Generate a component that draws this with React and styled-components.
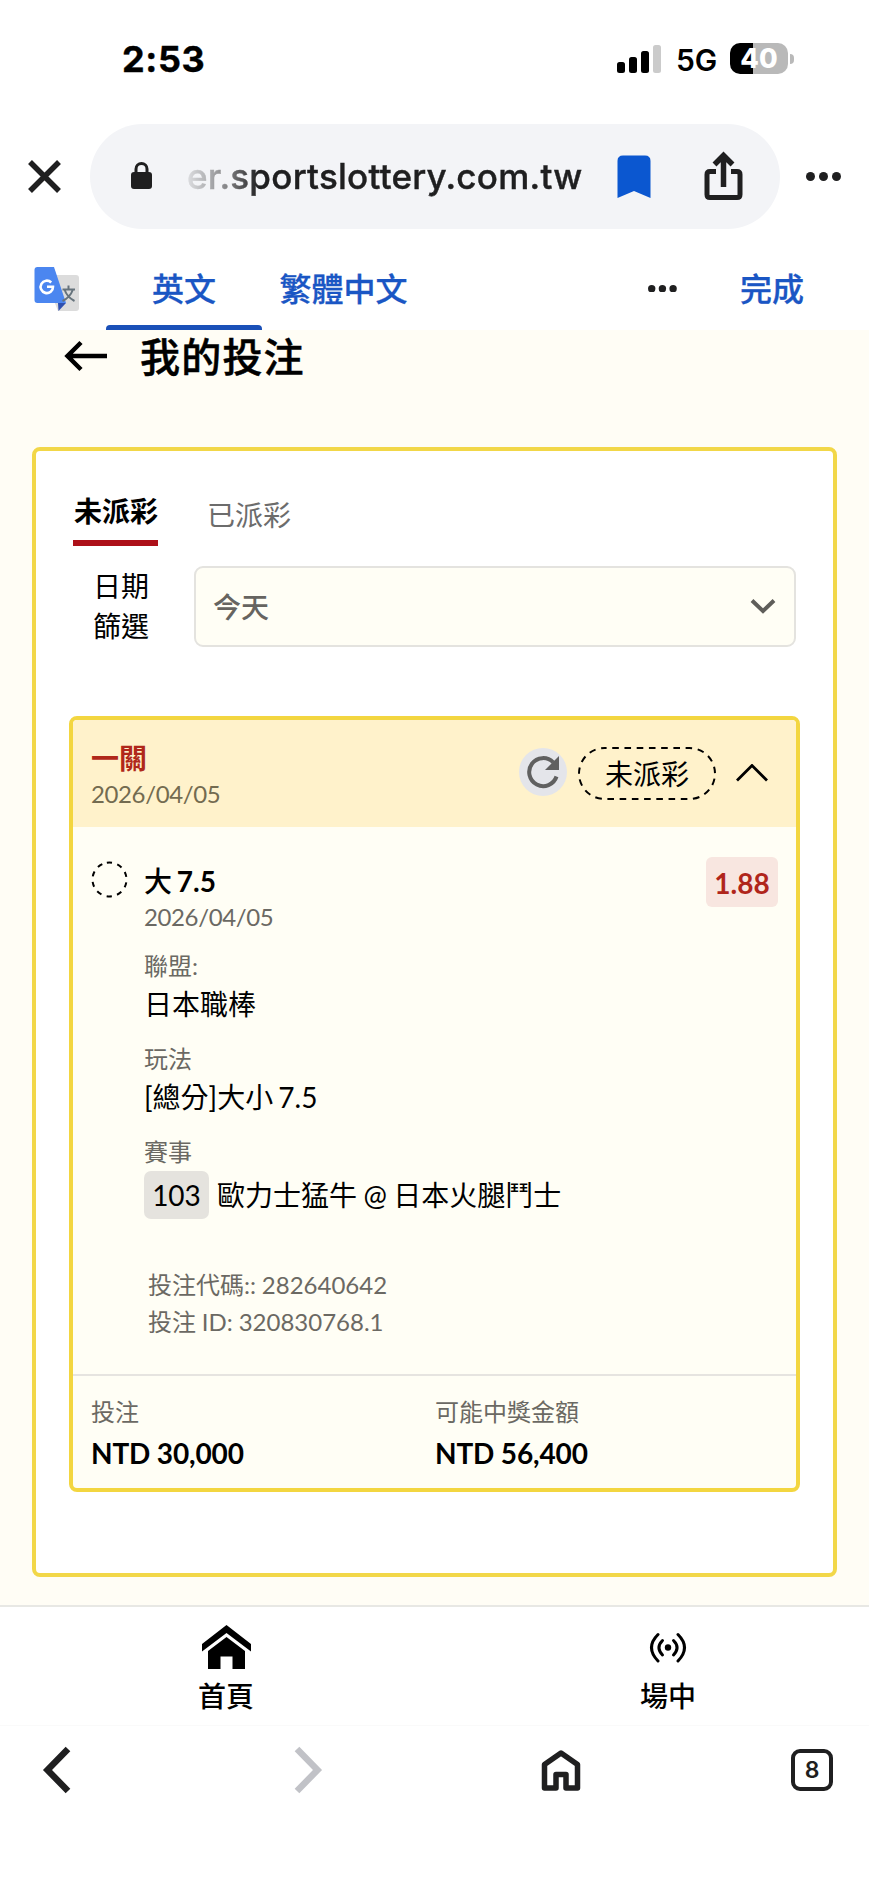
import React from "react";
import styled, { createGlobalStyle } from "styled-components";

const GlobalStyle = createGlobalStyle`
  *, *::before, *::after { box-sizing: border-box; }
  body {
    margin: 0;
    background: #fff;
    color: #000;
    font-family: Lato, "Noto Sans CJK TC", sans-serif;
  }
  svg { display: block; flex: none; }
`;

const uiFont = `Inter, "Noto Sans CJK TC", sans-serif`;

const Screen = styled.div`
  width: 869px;
  height: 1884px;
  display: flex;
  flex-direction: column;
  overflow: hidden;
  background: #fff;
`;

/* ---------- status bar ---------- */
const StatusBar = styled.div`
  height: 123px;
  padding: 0 75px 6px 122px;
  display: flex;
  align-items: center;
  font-family: ${uiFont};
`;
const Clock = styled.div`
  flex: 1;
  font-size: 36px;
  font-weight: 700;
  line-height: 44px;
  letter-spacing: 0.6px;
  -webkit-text-stroke: 0.4px #000;
`;
const Network = styled.div`
  margin: 2px 12px 0 14px;
  width: 42px;
  font-size: 30px;
  font-weight: 600;
  line-height: 36px;
`;
const Battery = styled.div`
  width: 58px;
  height: 31px;
  margin-right: 2px;
  border-radius: 10px;
  background: linear-gradient(to right, #000 23px, #b9b9b9 23px);
  color: #fff;
  font-size: 27px;
  font-weight: 800;
  line-height: 31px;
  text-align: center;
`;
const BatteryTip = styled.div`
  width: 4px;
  height: 10px;
  border-radius: 0 5px 5px 0;
  background: #b9b9b9;
`;

/* ---------- address bar ---------- */
const AddressRow = styled.div`
  height: 106px;
  padding: 0 26px 0 27px;
  display: flex;
  align-items: center;
`;
const AddressPill = styled.div`
  width: 690px;
  height: 105px;
  margin: 0 26px 0 28px;
  padding: 0 37px 0 41px;
  display: flex;
  align-items: center;
  border-radius: 53px;
  background: #f3f4f7;
`;
const Url = styled.div`
  width: 400px;
  margin: 0 30px 0 35px;
  font-family: ${uiFont};
  font-size: 35px;
  font-weight: 550;
  letter-spacing: 0.25px;
  line-height: 48px;
  white-space: nowrap;
  color: #1f1f20;
  -webkit-text-stroke: 0.4px #1f1f20;
  mask-image: linear-gradient(to right, rgba(0, 0, 0, 0.1) 0, rgba(0, 0, 0, 0.5) 38px, #000 72px);
`;
const ShareSlot = styled.div`
  margin-left: auto;
`;

/* ---------- translate bar ---------- */
const TranslateBar = styled.div`
  height: 101px;
  padding: 0 65px 0 33px;
  display: flex;
  font-family: ${uiFont};
`;
const LogoSlot = styled.div`
  padding-top: 38px;
  width: 73px;
`;
const Language = styled.div`
  width: ${(p) => p.$width}px;
  padding-top: 39px;
  text-align: center;
  font-size: 32px;
  font-weight: 500;
  line-height: 43px;
  color: #1a56c4;
  -webkit-text-stroke: 0.3px #1a56c4;
  border-bottom: 5px solid transparent;
  ${(p) =>
    p.$active &&
    `position: relative;
     &::after {
       content: "";
       position: absolute;
       left: 0; right: 0; bottom: -5px;
       height: 5px;
       border-radius: 4px 4px 0 0;
       background: #1a50b8;
     }`}
`;
const MoreSlot = styled.div`
  margin-left: auto;
  padding-top: 56px;
  width: 92px;
`;

/* ---------- page ---------- */
const Page = styled.main`
  height: 1275px;
  padding: 0 32px;
  background: #fffdf5;
`;
const PageHeader = styled.header`
  height: 117px;
  padding: 0 0 0 32px;
  display: flex;
  align-items: flex-start;
`;
const BackSlot = styled.div`
  margin-top: 10px;
`;
const Title = styled.h1`
  margin: 2px 0 0 32px;
  font-size: 40px;
  font-weight: 500;
  letter-spacing: 1.2px;
  line-height: 50px;
  -webkit-text-stroke: 0.5px #000;
`;
const Panel = styled.section`
  width: 805px;
  height: 1130px;
  border: 4px solid #f2d748;
  border-radius: 8px;
  padding: 0 33px;
  background: #fff;
`;
const Tabs = styled.div`
  display: flex;
  gap: 48px;
  padding: 40px 0 0 4px;
  height: 95px;
`;
const Tab = styled.div`
  height: 55px;
  padding: ${(p) => (p.$active ? 0 : 4)}px 0 0 1px;
  font-size: 28px;
  line-height: 40px;
  font-weight: ${(p) => (p.$active ? 700 : 400)};
  color: ${(p) => (p.$active ? "#000" : "#6c6c6c")};
  ${(p) => p.$active && "border-bottom: 6px solid #ad1019;"}
`;
const FilterRow = styled.div`
  display: flex;
  align-items: center;
  margin-top: 20px;
  height: 81px;
  padding-left: 24px;
`;
const FilterLabel = styled.div`
  width: 57px;
  margin: 0 44px 1px 0;
  font-size: 28px;
  line-height: 40px;
`;
const Select = styled.div`
  width: 602px;
  height: 81px;
  padding: 0 18px 2px 17px;
  display: flex;
  align-items: center;
  justify-content: space-between;
  border: 2px solid #e4e3df;
  border-radius: 9px;
  background: #fffef5;
  color: #666460;
  font-size: 28px;
  font-weight: 500;
`;

/* ---------- bet slip ---------- */
const Slip = styled.article`
  width: 731px;
  height: 776px;
  margin-top: 69px;
  border: 4px solid #f3d640;
  border-radius: 8px;
  background: #fffef5;
  overflow: hidden;
`;
const SlipHeader = styled.div`
  height: 107px;
  padding: 0 28px 0 18px;
  display: flex;
  align-items: center;
  background: #fff2cb;
`;
const SlipHeading = styled.div`
  flex: 1;
`;
const SlipTitle = styled.div`
  font-size: 28px;
  font-weight: 700;
  line-height: 40px;
  color: #b0281a;
`;
const Muted = styled.div`
  font-size: 24px;
  line-height: ${(p) => p.$line || 32}px;
  color: ${(p) => p.$tone || "#6b6963"};
  word-spacing: -0.3px;
`;
const SlipDate = styled(Muted)`
  letter-spacing: -0.38px;
`;
const Refresh = styled.div`
  width: 48px;
  height: 48px;
  border-radius: 50%;
  display: flex;
  align-items: center;
  justify-content: center;
  background: #e4e5ea;
  margin: 0 11px 3px 0;
`;
const StatusPill = styled.div`
  position: relative;
  width: 138px;
  height: 53px;
  font-size: 28px;
  line-height: 54px;
  text-align: center;
  margin-right: 20px;

  svg {
    position: absolute;
    inset: 0;
  }
`;
const SlipBody = styled.div`
  height: 547px;
  padding: 34px 18px 0 18px;
  display: flex;
  align-items: flex-start;
`;
const Details = styled.div`
  flex: 1;
  padding-left: 16px;
`;
const Pick = styled.div`
  font-size: 28px;
  font-weight: 700;
  line-height: 40px;
  word-spacing: -2px;
`;
const PickSide = styled.span`
  font-weight: 500;
`;
const Odds = styled.div`
  width: 72px;
  height: 50px;
  margin-top: -4px;
  border-radius: 6px;
  background: #f8e6e0;
  color: #b0251b;
  font-size: 28px;
  font-weight: 700;
  line-height: 52px;
  text-align: center;
`;
const Field = styled.div`
  margin-top: ${(p) => p.$gap}px;
`;
const FieldValue = styled.div`
  margin-top: 2px;
  font-size: 28px;
  line-height: 40px;
  word-spacing: -2px;
`;
const Matchup = styled.div`
  display: flex;
  align-items: center;
  margin-top: 3px;
  font-size: 28px;
  line-height: 48px;
  white-space: nowrap;
  word-spacing: -0.7px;
`;
const MatchNo = styled.span`
  width: 65px;
  margin-right: 8px;
  border-radius: 7px;
  background: #e5e3de;
  text-align: center;
`;
const Codes = styled.div`
  margin-top: 48px;
  padding-left: 4px;
`;
const SlipFooter = styled.div`
  display: grid;
  grid-template-columns: 344px 1fr;
  padding: 20px 18px 0 18px;
  border-top: 2px solid #e6e4e0;
`;
const Amount = styled.div`
  margin-top: 4px;
  font-size: 28px;
  font-weight: 700;
  line-height: 42px;
  letter-spacing: -0.15px;
`;

/* ---------- bottom navigation ---------- */
const SiteNav = styled.nav`
  height: 121px;
  display: flex;
  border-top: 2px solid #e8e8e4;
  border-bottom: 1px solid #fafafa;
`;
const NavItem = styled.div`
  width: ${(p) => p.$width}px;
  padding-left: ${(p) => p.$shift}px;
  display: flex;
  flex-direction: column;
  align-items: center;
  font-size: 28px;
  font-weight: 500;
  line-height: 40px;
`;
const NavIcon = styled.div`
  height: 69px;
  padding-top: 18px;
`;
const BrowserBar = styled.nav`
  height: 88px;
  padding-left: 42px;
  display: grid;
  grid-template-columns: 252px 247px 250px 42px;
  align-items: center;
`;
const TabCount = styled.div`
  width: 42px;
  height: 42px;
  border: 4px solid #1f1f20;
  border-radius: 9px;
  color: #1f1f20;
  font-family: ${uiFont};
  font-size: 23px;
  font-weight: 600;
  line-height: 35px;
  text-align: center;
`;

const ink = "#1f1f20";

const Signal = () => (
  <svg width="45" height="28" viewBox="0 0 45 28">
    <rect x="0" y="17" width="8" height="11" rx="2.5" />
    <rect x="12" y="12" width="8" height="16" rx="2.5" />
    <rect x="24" y="6" width="8" height="22" rx="2.5" />
    <rect x="36" y="0" width="8" height="28" rx="2.5" fill="#cbcbcb" />
  </svg>
);

const Close = () => (
  <svg width="35" height="35" viewBox="0 0 35 35" stroke={ink} strokeWidth="5.5" fill="none">
    <path d="M3 3 32 32M32 3 3 32" />
  </svg>
);

const Lock = () => (
  <svg width="21" height="28" viewBox="0 0 21 28">
    <rect x="0" y="10" width="21" height="17" rx="3" fill={ink} />
    <path d="M5 12V7a5.5 5.5 0 0 1 11 0v5" fill="none" stroke={ink} strokeWidth="3" />
  </svg>
);

const Bookmark = () => (
  <svg width="34" height="43" viewBox="0 0 34 43">
    <path d="M0.5 43V6Q.5 .5 6 .5H28Q33.500 .5 33.500 6V43L17 36Z" fill="#0b57d0" />
  </svg>
);

const Share = () => (
  <svg width="39" height="50" viewBox="0 0 39 50" fill="none" stroke={ink} strokeWidth="5">
    <path d="M12 20.500H6Q3 20.500 3 23.500V43.500Q3 46.500 6 46.500H33Q36 46.500 36 43.500V23.500Q36 20.500 33 20.500H27" />
    <path d="M19.500 36V6M10.500 13.500 19.500 4.500 28.500 13.500" strokeWidth="5.500" />
  </svg>
);

const Dots = ({ gap, r }) => (
  <svg width={gap * 2 + r * 2} height={r * 2}>
    {[0, 1, 2].map((i) => (
      <circle key={i} cx={r + i * gap} cy={r} r={r} fill={ink} />
    ))}
  </svg>
);

const TranslateLogo = () => (
  <svg width="47" height="45" viewBox="0 0 47 45">
    <path d="M22 8H43Q46 8 46 11V41Q46 44 43 44H25L18 26Z" fill="#dcdcdc" />
    <path d="M25 36H33L25.500 44Z" fill="#2f50b0" />
    <path d="M4.500 0H21L33 36H4.500Q1.500 36 1.500 33V3Q1.500 0 4.500 0Z" fill="#4b86f0" />
    <path d="M18.200 15.500A6.200 6.200 0 1 0 20 19.700H14" fill="none" stroke="#fff" strokeWidth="2.600" />
    <path d="M29.500 22.500H42M35.500 18.500V22.500M40 22.500Q37 30.500 29.500 34M31.500 22.500Q34 30 41.500 34" fill="none" stroke="#66737c" strokeWidth="2" />
  </svg>
);

const ArrowLeft = () => (
  <svg width="44" height="32" viewBox="0 0 44 32" fill="none" stroke="#000" strokeWidth="4.500">
    <path d="M43 16H4M17 2.500 3.500 16 17 29.500" />
  </svg>
);

const ChevronDown = () => (
  <svg width="26" height="16" viewBox="0 0 26 16" fill="none" stroke="#5f5e5a" strokeWidth="4">
    <path d="M2 2.500 13 13 24 2.500" />
  </svg>
);

const ChevronUp = () => (
  <svg width="32" height="20" viewBox="0 0 32 20" fill="none" stroke="#000" strokeWidth="2.800">
    <path d="M1 16.500 16 1.500 31 16.500" />
  </svg>
);

const RefreshIcon = () => (
  <svg width="36" height="36" viewBox="0 0 36 36">
    <path d="M28.200 8.300A14 14 0 1 0 31.500 22.500" fill="none" stroke="#606060" strokeWidth="4" />
    <path d="M34 2V16H20Z" fill="#606060" />
  </svg>
);

const DashedOutline = () => (
  <svg width="138" height="53" viewBox="0 0 138 53">
    <rect x="1" y="1" width="136" height="51" rx="25.500" fill="none" stroke="#000" strokeWidth="2" strokeDasharray="6.600 5.630" strokeDashoffset="4.500" />
  </svg>
);

const PendingCircle = () => (
  <svg width="37" height="37" viewBox="0 0 37 37">
    <circle cx="18.500" cy="18.500" r="17" fill="none" stroke="#000" strokeWidth="2" strokeDasharray="5.200 5.480" transform="rotate(-99 18.500 18.500)" />
  </svg>
);

const HouseSolid = () => (
  <svg width="49" height="45" viewBox="0 0 49 45">
    <path d="M24.500 0 49 19V26.500L24.500 8 0 26.500V19Z" />
    <path d="M24.500 12 43 26V44H30.500V31.500H18.500V44H6V26Z" />
  </svg>
);

const Live = () => (
  <svg width="38" height="45" viewBox="0 0 38 45" fill="none" stroke="#000" strokeWidth="3" strokeLinecap="round">
    <circle cx="19" cy="22.500" r="3.200" fill="#000" stroke="none" />
    <path d="M13.500 15.500Q6.500 22.500 13.500 30M24.500 15.500Q31.500 22.500 24.500 30" />
    <path d="M9 9.500Q-4 22.500 9 36M29 9.500Q42 22.500 29 36" />
  </svg>
);

const Chevron = ({ flip, color }) => (
  <svg width="29" height="48" viewBox="0 0 29 48" fill="none" stroke={color} strokeWidth="6.500">
    <path d={flip ? "M3 3 23.500 24 3 45" : "M26 3 5.500 24 26 45"} />
  </svg>
);

const HouseOutline = () => (
  <svg width="40" height="43" viewBox="0 0 40 43" fill="none" stroke={ink} strokeWidth="5.500" strokeLinejoin="round">
    <path d="M3.500 15.500 20 4 36.500 15.500V39H25V25.500H15V39H3.500Z" />
  </svg>
);

const LabeledField = ({ label, gap = 19, children }) => (
  <Field $gap={gap}>
    <Muted>{label}</Muted>
    {children}
  </Field>
);

export default function App() {
  return (
    <Screen>
      <GlobalStyle />
      <StatusBar>
        <Clock>2:53</Clock>
        <Signal />
        <Network>5G</Network>
        <Battery>40</Battery>
        <BatteryTip />
      </StatusBar>

      <AddressRow>
        <Close />
        <AddressPill>
          <Lock />
          <Url>er.sportslottery.com.tw</Url>
          <Bookmark />
          <ShareSlot>
            <Share />
          </ShareSlot>
        </AddressPill>
        <Dots gap={13} r={4.5} />
      </AddressRow>

      <TranslateBar>
        <LogoSlot>
          <TranslateLogo />
        </LogoSlot>
        <Language $width={156} $active>英文</Language>
        <Language $width={163}>繁體中文</Language>
        <MoreSlot>
          <Dots gap={10.7} r={3.7} />
        </MoreSlot>
        <Language $width={64}>完成</Language>
      </TranslateBar>

      <Page>
        <PageHeader>
          <BackSlot>
            <ArrowLeft />
          </BackSlot>
          <Title>我的投注</Title>
        </PageHeader>
        <Panel>
          <Tabs>
            <Tab $active>未派彩</Tab>
            <Tab>已派彩</Tab>
          </Tabs>
          <FilterRow>
            <FilterLabel>日期篩選</FilterLabel>
            <Select>
              今天
              <ChevronDown />
            </Select>
          </FilterRow>

          <Slip>
            <SlipHeader>
              <SlipHeading>
                <SlipTitle>一關</SlipTitle>
                <SlipDate $tone="#736b50">2026/04/05</SlipDate>
              </SlipHeading>
              <Refresh>
                <RefreshIcon />
              </Refresh>
              <StatusPill>
                <DashedOutline />
                未派彩
              </StatusPill>
              <ChevronUp />
            </SlipHeader>
            <SlipBody>
              <PendingCircle />
              <Details>
                <Pick>
                  <PickSide>大</PickSide> 7.5
                </Pick>
                <SlipDate>2026/04/05</SlipDate>
                <LabeledField label="聯盟:" gap={17}>
                  <FieldValue>日本職棒</FieldValue>
                </LabeledField>
                <LabeledField label="玩法">
                  <FieldValue>[總分]大小 7.5</FieldValue>
                </LabeledField>
                <LabeledField label="賽事">
                  <Matchup>
                    <MatchNo>103</MatchNo>
                    歐力士猛牛 @ 日本火腿鬥士
                  </Matchup>
                </LabeledField>
                <Codes>
                  <Muted $line={36.5}>投注代碼:: 282640642</Muted>
                  <Muted $line={36}>投注 ID: 320830768.1</Muted>
                </Codes>
              </Details>
              <Odds>1.88</Odds>
            </SlipBody>
            <SlipFooter>
              <div>
                <Muted>投注</Muted>
                <Amount>NTD 30,000</Amount>
              </div>
              <div>
                <Muted>可能中獎金額</Muted>
                <Amount>NTD 56,400</Amount>
              </div>
            </SlipFooter>
          </Slip>
        </Panel>
      </Page>

      <SiteNav>
        <NavItem $width={435} $shift={17}>
          <NavIcon>
            <HouseSolid />
          </NavIcon>
          首頁
        </NavItem>
        <NavItem $width={434} $shift={32}>
          <NavIcon>
            <Live />
          </NavIcon>
          場中
        </NavItem>
      </SiteNav>
      <BrowserBar>
        <Chevron color={ink} />
        <Chevron flip color="#c1c2c7" />
        <HouseOutline />
        <TabCount>8</TabCount>
      </BrowserBar>
    </Screen>
  );
}
